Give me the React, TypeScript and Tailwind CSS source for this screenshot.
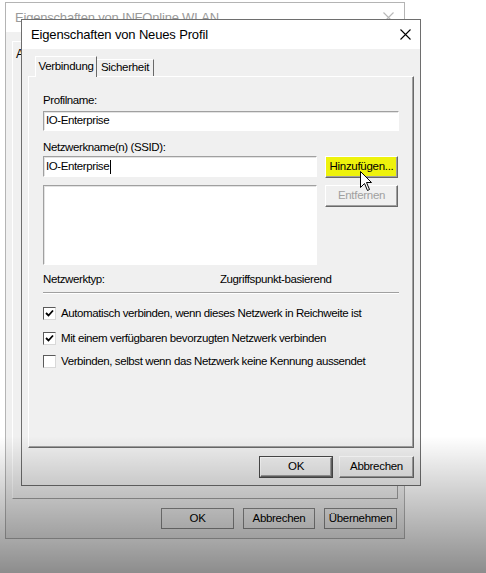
import React from 'react';

const FONT = { fontFamily: '"Liberation Sans", Arial, sans-serif' };

// klassischer 3D-Button
const Btn: React.FC<{ label: string; className?: string; disabled?: boolean; highlight?: boolean }> = ({
  label,
  className = '',
  disabled,
  highlight,
}) => (
  <div
    className={`flex items-center justify-center border border-t-white border-l-white border-r-[#696969] border-b-[#696969] shadow-[inset_-1px_-1px_0_#a0a0a0] text-[11.5px] tracking-[-0.3px] ${
      highlight ? 'bg-[#eef20c]' : 'bg-[#f0f0f0]'
    } ${disabled ? 'text-[#a0a0a0]' : 'text-black'} ${className}`}
  >
    {label}
  </div>
);

// Eingabefeld (eingesunken)
const Field: React.FC<{ value?: string; caret?: boolean; className?: string }> = ({ value, caret, className = '' }) => (
  <div
    className={`bg-white border border-t-[#a0a0a0] border-l-[#a0a0a0] border-r-white border-b-white shadow-[inset_1px_1px_0_#e3e3e3] flex items-center pl-[2px] text-[11.5px] tracking-[-0.4px] text-black ${className}`}
  >
    {value}
    {caret && <span className="inline-block w-px h-[14px] bg-black ml-px" />}
  </div>
);

const Check: React.FC<{ checked?: boolean; label: string; className?: string }> = ({ checked, label, className = '' }) => (
  <div className={`flex items-center gap-[5px] h-[15px] ${className}`}>
    <div className="w-[13px] h-[13px] bg-white border border-t-[#5a5a5a] border-l-[#5a5a5a] border-r-[#d8d8d8] border-b-[#d8d8d8] flex items-center justify-center">
      {checked && (
        <svg width="9" height="9" viewBox="0 0 9 9">
          <polyline points="1,4 3.5,6.5 8,1.5" fill="none" stroke="#000" strokeWidth="1.8" />
        </svg>
      )}
    </div>
    <span className="text-[11.5px] tracking-[-0.4px] text-black">{label}</span>
  </div>
);

const CloseX: React.FC<{ color: string }> = ({ color }) => (
  <svg width="11" height="11" viewBox="0 0 11 11">
    <path d="M0.5 0.5 L10.5 10.5 M10.5 0.5 L0.5 10.5" stroke={color} strokeWidth="1.1" />
  </svg>
);

export default function App() {
  return (
    <div className="relative w-[486px] h-[573px] bg-white overflow-hidden" style={FONT}>
      {/* hinteres Fenster */}
      <div className="absolute left-[5px] top-[2px] w-[400px] h-[537px] border border-[#b4b4b4] bg-[#f0f0f0] flex flex-col">
        <div className="h-[29px] bg-white flex items-center justify-between pl-[9px] pr-[10px]">
          <span className="text-[13px] tracking-[-0.2px] text-[#9a9a9a]">Eigenschaften von INFOnline WLAN</span>
          <CloseX color="#b8b8b8" />
        </div>
        <div className="flex-1 flex flex-col px-[6px] pt-[9px]">
          <div className="flex-1 border border-t-white border-l-white border-r-[#a0a0a0] border-b-[#a0a0a0] bg-[#f0f0f0] pl-[3px] pt-[3px] text-[12px]">
            A
          </div>
          <div className="h-[39px] flex items-center justify-end gap-[9px] pr-px">
            <Btn label="OK" className="w-[73px] h-[21px] !border-[#8a8a8a] shadow-none" />
            <Btn label="Abbrechen" className="w-[72px] h-[21px] !border-[#8a8a8a] shadow-none" />
            <Btn label="Übernehmen" className="w-[73px] h-[21px] !border-[#8a8a8a] shadow-none" />
          </div>
        </div>
      </div>

      {/* vorderes Fenster */}
      <div className="absolute left-[21px] top-[19px] w-[400px] h-[467px] border border-[#6e6e6e] bg-[#f0f0f0] flex flex-col">
        <div className="h-[29px] bg-white flex items-center justify-between pl-[9px] pr-[9px] shrink-0">
          <span className="text-[13px] tracking-[-0.15px] text-black">Eigenschaften von Neues Profil</span>
          <CloseX color="#000" />
        </div>

        <div className="flex-1 flex flex-col px-[6px] pt-[7px]">
          {/* Tabs */}
          <div className="flex items-end pl-[7px] h-[21px] relative z-10">
            <div className="h-[21px] w-[62px] bg-[#f0f0f0] border border-b-0 border-t-white border-l-white border-r-[#696969] flex items-center justify-center text-[11.5px] tracking-[-0.3px]">
              Verbindung
            </div>
            <div className="h-[17px] w-[57px] bg-[#f0f0f0] border border-b-0 border-t-white border-l-0 border-r-[#696969] flex items-center justify-center text-[11.5px] tracking-[-0.3px] mb-px">
              Sicherheit
            </div>
          </div>

          {/* Panel */}
          <div className="h-[372px] -mt-px border border-t-white border-l-white border-r-[#696969] border-b-[#696969] shadow-[inset_-1px_-1px_0_#a0a0a0] flex flex-col px-[14px] pt-[16px] text-[11.5px] tracking-[-0.4px] text-black">
            <div className="h-[15px] leading-[15px]">Profilname:</div>
            <Field value="IO-Enterprise" className="mt-[3px] h-[20px]" />
            <div className="h-[15px] leading-[15px] mt-[9px]">Netzwerkname(n) (SSID):</div>
            <div className="flex gap-[8px] mt-px">
              <Field value="IO-Enterprise" caret className="w-[274px] h-[21px]" />
              <Btn label="Hinzufügen..." highlight className="w-[73px] h-[22px]" />
            </div>
            <div className="flex gap-[8px] mt-[7px]">
              <Field className="w-[274px] h-[80px]" />
              <Btn label="Entfernen" disabled className="w-[73px] h-[22px]" />
            </div>
            <div className="flex mt-[7px] h-[15px] leading-[15px]">
              <span className="w-[177px]">Netzwerktyp:</span>
              <span>Zugriffspunkt-basierend</span>
            </div>
            <div className="mt-[5px] border-t border-[#a0a0a0] border-b border-b-white" />
            <Check checked label="Automatisch verbinden, wenn dieses Netzwerk in Reichweite ist" className="mt-[12px]" />
            <Check checked label="Mit einem verfügbaren bevorzugten Netzwerk verbinden" className="mt-[10px]" />
            <Check label="Verbinden, selbst wenn das Netzwerk keine Kennung aussendet" className="mt-[8px]" />
          </div>

          {/* Fußleiste */}
          <div className="flex-1 flex items-center justify-end gap-[6px] pr-0">
            <div className="border border-[#4a4a4a]">
              <Btn label="OK" className="w-[72px] h-[20px]" />
            </div>
            <Btn label="Abbrechen" className="w-[75px] h-[22px]" />
          </div>
        </div>
      </div>

      {/* Mauszeiger */}
      <svg className="absolute left-[360px] top-[171px]" width="13" height="21" viewBox="0 0 13 21">
        <path d="M0.5 0.5 L0.5 16.5 L4.5 12.5 L7.5 19.5 L9.5 18.5 L6.5 11.5 L11.5 11.5 Z" fill="#fff" stroke="#000" strokeWidth="1" />
      </svg>

      {/* Abdunklung unten */}
      <div className="absolute inset-x-0 top-[436px] bottom-0 bg-linear-to-b from-transparent to-black/45 pointer-events-none" />
    </div>
  );
}
